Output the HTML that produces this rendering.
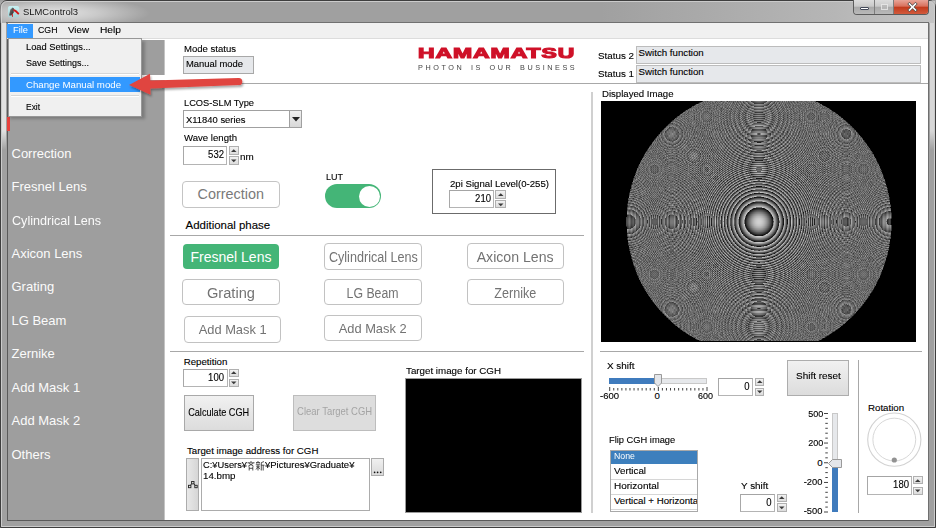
<!DOCTYPE html>
<html><head><meta charset="utf-8">
<style>
*{box-sizing:border-box;margin:0;padding:0}
html,body{width:936px;height:528px;overflow:hidden;background:#a0a0a0}
body{position:relative;font-family:"Liberation Sans",sans-serif;color:#1e1e1e}
.a{position:absolute}
.t{position:absolute;white-space:pre;line-height:1;font-family:"Liberation Sans",sans-serif}
.k{-webkit-text-stroke:0.12px #000}
svg{position:absolute;overflow:visible}
</style></head><body>
<div class="a" style="left:0px;top:0px;width:936px;height:528px;background:#a0a0a0;border:1px solid #3e3e3e;border-radius:7px 7px 0 0"></div>
<div class="a" style="left:1px;top:1px;width:934px;height:526px;border:1px solid rgba(255,255,255,0.45);border-radius:6px 6px 0 0"></div>
<div class="a" style="left:2px;top:23px;width:4px;height:127px;background:linear-gradient(180deg,rgba(225,225,225,1) 0%,rgba(225,225,225,1) 85%,rgba(225,225,225,0) 100%)"></div>
<div class="a" style="left:930px;top:23px;width:4px;height:127px;background:linear-gradient(180deg,rgba(215,215,215,1) 0%,rgba(215,215,215,1) 85%,rgba(215,215,215,0) 100%)"></div>
<div class="a" style="left:0px;top:1px;width:260px;height:22px;background:radial-gradient(ellipse 95px 16px at 55px 12px,rgba(228,228,228,1) 0%,rgba(220,220,220,.7) 45%,rgba(210,210,210,0) 100%)"></div>
<div class="a" style="left:600px;top:1px;width:335px;height:22px;background:linear-gradient(90deg,rgba(200,200,200,0) 0%,rgba(200,200,200,.55) 70%,rgba(205,205,205,.8) 100%)"></div>
<div class="a" style="left:6px;top:22px;width:923px;height:1px;background:#707070"></div>
<svg style="left:0;top:0" width="24" height="24" viewBox="0 0 24 24"><defs><linearGradient id="ig" x1="0" y1="0" x2="0" y2="1"><stop offset="0" stop-color="#c8f0f2"/><stop offset="1" stop-color="#a6d2d6"/></linearGradient><linearGradient id="ig2" x1="0" y1="0" x2="1" y2="1"><stop offset="0" stop-color="#8a8a8a"/><stop offset="1" stop-color="#1e1e1e"/></linearGradient></defs><rect x="8" y="6" width="11.2" height="11.5" rx="2" fill="url(#ig)"/><path d="M9 15.5 L10.3 9.8 L12.6 7.6 L14 8.4 L13.6 12.8 L11.3 15.6 Z" fill="url(#ig2)"/><path d="M14.2 10.2 Q16 10.6 18.3 13.6" stroke="#d41818" stroke-width="1.9" fill="none" stroke-linecap="round"/><path d="M12.2 13.8 L12.5 16.8" stroke="#d41818" stroke-width="1" fill="none"/></svg>
<div class="a" style="left:853px;top:0;width:76px;height:15px;border:1px solid #5c5c5c;border-top:none;border-radius:0 0 4px 4px;overflow:hidden;background:#bbb"><div class="a" style="left:0;top:0;width:21px;height:14px;background:linear-gradient(#dcdcdc,#cacaca 45%,#a9a9a9 50%,#b9b9b9 100%);border-right:1px solid #7d7d7d"></div><div class="a" style="left:21px;top:0;width:19px;height:14px;background:linear-gradient(#dcdcdc,#cacaca 45%,#a9a9a9 50%,#b9b9b9 100%);border-right:1px solid #7d7d7d"></div><div class="a" style="left:40px;top:0;width:35px;height:14px;background:linear-gradient(#e8a598,#d8705c 45%,#c23a1c 50%,#d25a3c 100%)"></div><div class="a" style="left:6px;top:7px;width:9px;height:3px;background:#fff;border:1px solid #444a5a;border-radius:1px"></div><div class="a" style="left:27px;top:4px;width:7px;height:6px;border:1px solid #e8e8e8;background:#b9b9b9;opacity:.85"></div></div>
<svg style="left:907px;top:2px" width="11" height="10" viewBox="0 0 11 10"><path d="M2.5 2 L8.5 8 M8.5 2 L2.5 8" stroke="#4a4a4a" stroke-width="3" stroke-linecap="square"/><path d="M2.5 2 L8.5 8 M8.5 2 L2.5 8" stroke="#fff" stroke-width="1.6" stroke-linecap="square"/></svg>
<div class="a" style="left:7px;top:23px;width:921px;height:16px;background:#f0f0f0;border-left:1px solid #7a7a7a"></div>
<div class="a" style="left:7px;top:38px;width:921px;height:2px;background:#dcdcdc"></div>
<div class="a" style="left:7px;top:24px;width:26px;height:14px;background:#3399ff"></div>
<div class="a" style="left:7px;top:39px;width:921px;height:482px;background:#fff;border-left:1px solid #5a5a5a;border-bottom:1px solid #5a5a5a"></div>
<div class="a" style="left:928px;top:23px;width:1px;height:498px;background:#6f6f6f"></div>
<div class="a" style="left:8px;top:40px;width:156px;height:480px;background:#9e9e9e"></div>
<div class="a" style="left:164px;top:40px;width:1px;height:480px;background:#c4c4c4"></div>
<div class="a" style="left:8px;top:75px;width:157px;height:5px;background:#fff"></div>
<div class="a" style="left:7px;top:117px;width:3px;height:14px;background:#e8413d"></div>
<div class="a" style="left:183px;top:56px;width:71px;height:18px;background:#e6e8eb;border:1px solid #a8a8a8"></div>
<div class="a" style="left:636px;top:46px;width:284.7px;height:18px;background:#e6e8eb;border:1px solid #bcbcbc"></div>
<div class="a" style="left:636px;top:65px;width:284.7px;height:18px;background:#e6e8eb;border:1px solid #bcbcbc"></div>
<div class="a" style="left:165px;top:83px;width:763px;height:1px;background:#a8a8a8"></div>
<div class="a" style="left:591px;top:92px;width:2px;height:421px;background:#d0d0d0"></div>
<div class="a" style="left:601px;top:101px;width:315px;height:240.5px;background:#000"></div>
<div class="a" style="left:183px;top:110px;width:119px;height:18px;background:#fff;border:1px solid #a0a0a0"></div>
<div class="a" style="left:289px;top:110px;width:13px;height:18px;background:linear-gradient(#efefef,#d8d8d8);border:1px solid #a0a0a0"></div>
<svg style="left:291.5px;top:116.5px" width="8" height="5" viewBox="0 0 8 5"><path d="M0 0 L8 0 L4 4.5Z" fill="#222"/></svg>
<div class="a" style="left:183px;top:146px;width:44px;height:19px;background:#fff;border:1px solid #b4b4b4;border-top-color:#a4a4a4;border-left-color:#a8a8a8"></div>
<div class="a" style="left:228.5px;top:146px;width:10.0px;height:8.5px;background:linear-gradient(#f2f2f2,#dcdcdc);border:1px solid #b0b0b0"></div>
<svg style="left:230.75px;top:148.5px" width="5.5" height="3.5" viewBox="0 0 5.5 3.5"><path d="M0 3 L2.75 0.3 L5.5 3Z" fill="#3a3a3a"/></svg>
<div class="a" style="left:228.5px;top:156px;width:10.0px;height:9px;background:linear-gradient(#f2f2f2,#dcdcdc);border:1px solid #b0b0b0"></div>
<svg style="left:230.75px;top:159.0px" width="5.5" height="3.5" viewBox="0 0 5.5 3.5"><path d="M0 0.5 L2.75 3.2 L5.5 0.5Z" fill="#3a3a3a"/></svg>
<div class="a" style="left:182px;top:181px;width:98px;height:26.5px;background:#fff;border:1px solid #c4c4c4;border-radius:4px"></div>
<div class="a" style="left:324.7px;top:184.3px;width:56.6px;height:24.2px;background:#44b577;border-radius:12px"></div>
<div class="a" style="left:358.5px;top:185.7px;width:21.2px;height:21.2px;border-radius:50%;background:#fff"></div>
<div class="a" style="left:432px;top:168.7px;width:124px;height:45.3px;border:1px solid #6b6b6b"></div>
<div class="a" style="left:449.3px;top:190.2px;width:44.7px;height:18.1px;background:#fff;border:1px solid #b4b4b4;border-top-color:#a4a4a4;border-left-color:#a8a8a8"></div>
<div class="a" style="left:495px;top:190.2px;width:10.5px;height:8.8px;background:linear-gradient(#f2f2f2,#dcdcdc);border:1px solid #b0b0b0"></div>
<svg style="left:497.5px;top:192.85px" width="5.5" height="3.5" viewBox="0 0 5.5 3.5"><path d="M0 3 L2.75 0.3 L5.5 3Z" fill="#3a3a3a"/></svg>
<div class="a" style="left:495px;top:200px;width:10.5px;height:8.3px;background:linear-gradient(#f2f2f2,#dcdcdc);border:1px solid #b0b0b0"></div>
<svg style="left:497.5px;top:202.65px" width="5.5" height="3.5" viewBox="0 0 5.5 3.5"><path d="M0 0.5 L2.75 3.2 L5.5 0.5Z" fill="#3a3a3a"/></svg>
<div class="a" style="left:170px;top:235px;width:414px;height:1px;background:#a8a8a8"></div>
<div class="a" style="left:182.8px;top:244.2px;width:96.4px;height:24.8px;background:#44b577;border-radius:4px"></div>
<div class="a" style="left:324.4px;top:243.3px;width:97.3px;height:26.4px;background:#fff;border:1px solid #c2c2c2;border-radius:4px"></div>
<div class="a" style="left:466.6px;top:243.2px;width:97.3px;height:26.1px;background:#fff;border:1px solid #c2c2c2;border-radius:4px"></div>
<div class="a" style="left:182px;top:278.9px;width:97.7px;height:26.4px;background:#fff;border:1px solid #c2c2c2;border-radius:4px"></div>
<div class="a" style="left:324.4px;top:279px;width:97.3px;height:26.3px;background:#fff;border:1px solid #c2c2c2;border-radius:4px"></div>
<div class="a" style="left:466.6px;top:279.3px;width:97.3px;height:26.2px;background:#fff;border:1px solid #c2c2c2;border-radius:4px"></div>
<div class="a" style="left:183.9px;top:316px;width:97.5px;height:26.5px;background:#fff;border:1px solid #c2c2c2;border-radius:4px"></div>
<div class="a" style="left:324.4px;top:314.7px;width:97.3px;height:26.3px;background:#fff;border:1px solid #c2c2c2;border-radius:4px"></div>
<div class="a" style="left:170px;top:351px;width:414px;height:1px;background:#a8a8a8"></div>
<div class="a" style="left:183px;top:369.2px;width:44.5px;height:17.6px;background:#fff;border:1px solid #b4b4b4;border-top-color:#a4a4a4;border-left-color:#a8a8a8"></div>
<div class="a" style="left:229px;top:369.2px;width:10px;height:7.8px;background:linear-gradient(#f2f2f2,#dcdcdc);border:1px solid #b0b0b0"></div>
<svg style="left:231.25px;top:371.35px" width="5.5" height="3.5" viewBox="0 0 5.5 3.5"><path d="M0 3 L2.75 0.3 L5.5 3Z" fill="#3a3a3a"/></svg>
<div class="a" style="left:229px;top:379px;width:10px;height:7.8px;background:linear-gradient(#f2f2f2,#dcdcdc);border:1px solid #b0b0b0"></div>
<svg style="left:231.25px;top:381.4px" width="5.5" height="3.5" viewBox="0 0 5.5 3.5"><path d="M0 0.5 L2.75 3.2 L5.5 0.5Z" fill="#3a3a3a"/></svg>
<div class="a" style="left:184.2px;top:395px;width:69.8px;height:36.3px;background:linear-gradient(#f1f1f1,#dcdcdc);border:1px solid #a9a9a9"></div>
<div class="a" style="left:292.8px;top:395px;width:83.2px;height:36.3px;background:#dddddd;border:1px solid #bdbdbd"></div>
<div class="a" style="left:186.3px;top:458.3px;width:12.5px;height:53.2px;background:linear-gradient(90deg,#e8e8e8,#d6d6d6);border:1px solid #acacac"></div>
<svg style="left:187.5px;top:481px" width="10" height="8" viewBox="0 0 10 8"><g fill="none" stroke="#222" stroke-width="0.9"><rect x="3.6" y="0.5" width="2.4" height="2.4"/><rect x="0.5" y="4.3" width="2.4" height="2.4"/><rect x="6.8" y="4.3" width="2.4" height="2.4"/><path d="M3.8 2.6 L2.4 4.3 M5.8 2.6 L7.2 4.3"/></g></svg>
<div class="a" style="left:201px;top:458.3px;width:168.5px;height:53.2px;background:#fff;border:1px solid #acacac"></div>
<div class="a" style="left:371.4px;top:458.3px;width:12.9px;height:17.7px;background:linear-gradient(#f0f0f0,#dadada);border:1px solid #acacac"></div>
<svg style="left:373px;top:471px" width="9" height="3" viewBox="0 0 9 3"><circle cx="1.6" cy="1.3" r="0.85" fill="#111"/><circle cx="4.6" cy="1.3" r="0.85" fill="#111"/><circle cx="7.7" cy="1.3" r="0.85" fill="#111"/></svg>
<div class="a" style="left:405px;top:378px;width:176.5px;height:134.7px;background:#000;border:1px solid #9a9a9a"></div>
<div class="a" style="left:600px;top:351px;width:321.5px;height:1px;background:#a8a8a8"></div>
<div class="a" style="left:609.2px;top:377.7px;width:97.8px;height:6.0px;background:#e6e8eb;border:1px solid #c8c8c8"></div>
<div class="a" style="left:609.2px;top:377.7px;width:48.8px;height:6.0px;background:#3f7bbd"></div>
<svg style="left:653.9px;top:373.5px" width="8" height="13" viewBox="0 0 8 13"><path d="M0.5 0.5 H7.5 V9 L4 12.5 L0.5 9Z" fill="#e4e6ea" stroke="#9a9a9a" stroke-width="1"/></svg>
<svg style="left:0;top:0" width="936" height="528"><rect x="609.20" y="387" width="1" height="4" fill="#444"/><rect x="613.25" y="388" width="1" height="2.5" fill="#444"/><rect x="617.31" y="388" width="1" height="2.5" fill="#444"/><rect x="621.36" y="388" width="1" height="2.5" fill="#444"/><rect x="625.42" y="388" width="1" height="2.5" fill="#444"/><rect x="629.47" y="388" width="1" height="2.5" fill="#444"/><rect x="633.53" y="388" width="1" height="2.5" fill="#444"/><rect x="637.58" y="388" width="1" height="2.5" fill="#444"/><rect x="641.63" y="388" width="1" height="2.5" fill="#444"/><rect x="645.69" y="388" width="1" height="2.5" fill="#444"/><rect x="649.74" y="388" width="1" height="2.5" fill="#444"/><rect x="653.80" y="388" width="1" height="2.5" fill="#444"/><rect x="657.85" y="387" width="1" height="4" fill="#444"/><rect x="661.90" y="388" width="1" height="2.5" fill="#444"/><rect x="665.96" y="388" width="1" height="2.5" fill="#444"/><rect x="670.01" y="388" width="1" height="2.5" fill="#444"/><rect x="674.07" y="388" width="1" height="2.5" fill="#444"/><rect x="678.12" y="388" width="1" height="2.5" fill="#444"/><rect x="682.18" y="388" width="1" height="2.5" fill="#444"/><rect x="686.23" y="388" width="1" height="2.5" fill="#444"/><rect x="690.28" y="388" width="1" height="2.5" fill="#444"/><rect x="694.34" y="388" width="1" height="2.5" fill="#444"/><rect x="698.39" y="388" width="1" height="2.5" fill="#444"/><rect x="702.45" y="388" width="1" height="2.5" fill="#444"/><rect x="706.50" y="387" width="1" height="4" fill="#444"/></svg>
<div class="a" style="left:717.5px;top:378px;width:35.5px;height:17.5px;background:#fff;border:1px solid #b4b4b4;border-top-color:#a4a4a4;border-left-color:#a8a8a8"></div>
<div class="a" style="left:754.8px;top:378px;width:9.6px;height:7.8px;background:linear-gradient(#f2f2f2,#dcdcdc);border:1px solid #b0b0b0"></div>
<svg style="left:756.8499999999999px;top:380.15px" width="5.5" height="3.5" viewBox="0 0 5.5 3.5"><path d="M0 3 L2.75 0.3 L5.5 3Z" fill="#3a3a3a"/></svg>
<div class="a" style="left:754.8px;top:387.5px;width:9.6px;height:8.0px;background:linear-gradient(#f2f2f2,#dcdcdc);border:1px solid #b0b0b0"></div>
<svg style="left:756.8499999999999px;top:390.0px" width="5.5" height="3.5" viewBox="0 0 5.5 3.5"><path d="M0 0.5 L2.75 3.2 L5.5 0.5Z" fill="#3a3a3a"/></svg>
<div class="a" style="left:787.2px;top:360px;width:62.2px;height:35.5px;background:linear-gradient(#f1f1f1,#dcdcdc);border:1px solid #adadad"></div>
<div class="a" style="left:858px;top:360px;width:1px;height:153px;background:#a8a8a8"></div>
<svg style="left:0;top:0" width="936" height="528"><circle cx="894.3" cy="439.6" r="26.6" fill="none" stroke="#d2d2d2" stroke-width="1.1"/><circle cx="894.3" cy="439.6" r="21.4" fill="none" stroke="#d8d8d8" stroke-width="1"/><circle cx="894.3" cy="460" r="2.6" fill="#929292"/></svg>
<div class="a" style="left:867.1px;top:476.4px;width:44.9px;height:18.8px;background:#fff;border:1px solid #b4b4b4;border-top-color:#a4a4a4;border-left-color:#a8a8a8"></div>
<div class="a" style="left:913.2px;top:476.4px;width:9.8px;height:8.0px;background:linear-gradient(#f2f2f2,#dcdcdc);border:1px solid #b0b0b0"></div>
<svg style="left:915.35px;top:478.65px" width="5.5" height="3.5" viewBox="0 0 5.5 3.5"><path d="M0 3 L2.75 0.3 L5.5 3Z" fill="#3a3a3a"/></svg>
<div class="a" style="left:913.2px;top:486.6px;width:9.8px;height:8.6px;background:linear-gradient(#f2f2f2,#dcdcdc);border:1px solid #b0b0b0"></div>
<svg style="left:915.35px;top:489.4px" width="5.5" height="3.5" viewBox="0 0 5.5 3.5"><path d="M0 0.5 L2.75 3.2 L5.5 0.5Z" fill="#3a3a3a"/></svg>
<div class="a" style="left:831.5px;top:413.3px;width:6.5px;height:98.7px;background:#e6e8eb;border:1px solid #c8c8c8"></div>
<div class="a" style="left:831.5px;top:465.5px;width:6.5px;height:46.5px;background:#3f7bbd"></div>
<svg style="left:828px;top:458.5px" width="14" height="9" viewBox="0 0 14 9"><path d="M13.5 0.5 V8.5 H4.5 L0.5 4.5 L4.5 0.5Z" fill="#e4e6ea" stroke="#9a9a9a" stroke-width="1"/></svg>
<svg style="left:0;top:0" width="936" height="528"><rect x="824" y="413.00" width="4" height="1" fill="#444"/><rect x="825.3" y="417.93" width="2.5" height="1" fill="#444"/><rect x="825.3" y="422.85" width="2.5" height="1" fill="#444"/><rect x="825.3" y="427.77" width="2.5" height="1" fill="#444"/><rect x="825.3" y="432.70" width="2.5" height="1" fill="#444"/><rect x="825.3" y="437.62" width="2.5" height="1" fill="#444"/><rect x="824" y="442.55" width="4" height="1" fill="#444"/><rect x="825.3" y="447.48" width="2.5" height="1" fill="#444"/><rect x="825.3" y="452.40" width="2.5" height="1" fill="#444"/><rect x="825.3" y="457.32" width="2.5" height="1" fill="#444"/><rect x="824" y="462.25" width="4" height="1" fill="#444"/><rect x="825.3" y="467.18" width="2.5" height="1" fill="#444"/><rect x="825.3" y="472.10" width="2.5" height="1" fill="#444"/><rect x="825.3" y="477.02" width="2.5" height="1" fill="#444"/><rect x="824" y="481.95" width="4" height="1" fill="#444"/><rect x="825.3" y="486.88" width="2.5" height="1" fill="#444"/><rect x="825.3" y="491.80" width="2.5" height="1" fill="#444"/><rect x="825.3" y="496.73" width="2.5" height="1" fill="#444"/><rect x="825.3" y="501.65" width="2.5" height="1" fill="#444"/><rect x="825.3" y="506.57" width="2.5" height="1" fill="#444"/><rect x="824" y="511.50" width="4" height="1" fill="#444"/></svg>
<div class="a" style="left:609.6px;top:449.6px;width:88.4px;height:62.0px;background:#fff;border:1px solid #a9a9a9"></div>
<div class="a" style="left:610.6px;top:450.6px;width:86.4px;height:13.4px;background:#3d7fbd"></div>
<div class="a" style="left:610.6px;top:479px;width:86.4px;height:1px;background:#d6d6d6"></div>
<div class="a" style="left:610.6px;top:494px;width:86.4px;height:1px;background:#d6d6d6"></div>
<div class="a" style="left:610.6px;top:508.8px;width:86.4px;height:1.0px;background:#d6d6d6"></div>
<div class="a" style="left:740px;top:494px;width:35px;height:17.6px;background:#fff;border:1px solid #b4b4b4;border-top-color:#a4a4a4;border-left-color:#a8a8a8"></div>
<div class="a" style="left:777.4px;top:494px;width:9.2px;height:7.8px;background:linear-gradient(#f2f2f2,#dcdcdc);border:1px solid #b0b0b0"></div>
<svg style="left:779.25px;top:496.15px" width="5.5" height="3.5" viewBox="0 0 5.5 3.5"><path d="M0 3 L2.75 0.3 L5.5 3Z" fill="#3a3a3a"/></svg>
<div class="a" style="left:777.4px;top:503.4px;width:9.2px;height:8.2px;background:linear-gradient(#f2f2f2,#dcdcdc);border:1px solid #b0b0b0"></div>
<svg style="left:779.25px;top:506.0px" width="5.5" height="3.5" viewBox="0 0 5.5 3.5"><path d="M0 0.5 L2.75 3.2 L5.5 0.5Z" fill="#3a3a3a"/></svg>
<div class="a" style="left:10px;top:41px;width:135px;height:78px;background:rgba(0,0,0,.22);filter:blur(1.5px)"></div>
<div class="a" style="left:7.5px;top:38px;width:134.5px;height:78.5px;background:#f0f0f0;border:1px solid #979797"></div>
<div class="a" style="left:10.5px;top:73px;width:128.0px;height:1px;background:#d7d7d7"></div>
<div class="a" style="left:10.5px;top:74px;width:128.0px;height:1px;background:#fff"></div>
<div class="a" style="left:9.7px;top:77.3px;width:130.5px;height:14.9px;background:#3399ff"></div>
<div class="a" style="left:10.5px;top:95px;width:128.0px;height:1px;background:#d7d7d7"></div>
<div class="a" style="left:10.5px;top:96px;width:128.0px;height:1px;background:#fff"></div>
<canvas id="cv" width="315" height="240" style="position:absolute;left:601px;top:101px;width:315px;height:240px;background:radial-gradient(circle at 50% 50%,#6a6a6a 0,#6a6a6a 131px,#000 132px)"></canvas>
<div class="t" style="left:23.20px;top:6.99px;font-size:9.7px;color:#141414;font-weight:400;transform:scaleX(0.9726);transform-origin:left top;">SLMControl3</div>
<div class="t" style="left:13.00px;top:25.29px;font-size:9.7px;color:#fff;font-weight:400;transform:scaleX(0.9600);transform-origin:left top;">File</div>
<div class="t k" style="left:37.50px;top:25.29px;font-size:9.7px;color:#000;font-weight:400;transform:scaleX(0.9057);transform-origin:left top;">CGH</div>
<div class="t k" style="left:67.50px;top:25.29px;font-size:9.7px;color:#000;font-weight:400;transform:scaleX(1.0083);transform-origin:left top;">View</div>
<div class="t k" style="left:99.50px;top:25.29px;font-size:9.7px;color:#000;font-weight:400;transform:scaleX(1.0533);transform-origin:left top;">Help</div>
<div class="t" style="left:11.50px;top:146.70px;font-size:13px;color:#fbfbfb;font-weight:400;">Correction</div>
<div class="t" style="left:11.50px;top:180.13px;font-size:13px;color:#fbfbfb;font-weight:400;">Fresnel Lens</div>
<div class="t" style="left:11.50px;top:213.56px;font-size:13px;color:#fbfbfb;font-weight:400;transform:scaleX(0.9699);transform-origin:left top;">Cylindrical Lens</div>
<div class="t" style="left:11.50px;top:246.99px;font-size:13px;color:#fbfbfb;font-weight:400;">Axicon Lens</div>
<div class="t" style="left:11.50px;top:280.42px;font-size:13px;color:#fbfbfb;font-weight:400;">Grating</div>
<div class="t" style="left:11.50px;top:313.85px;font-size:13px;color:#fbfbfb;font-weight:400;">LG Beam</div>
<div class="t" style="left:11.50px;top:347.28px;font-size:13px;color:#fbfbfb;font-weight:400;">Zernike</div>
<div class="t" style="left:11.50px;top:380.71px;font-size:13px;color:#fbfbfb;font-weight:400;">Add Mask 1</div>
<div class="t" style="left:11.50px;top:414.14px;font-size:13px;color:#fbfbfb;font-weight:400;">Add Mask 2</div>
<div class="t" style="left:11.50px;top:447.57px;font-size:13px;color:#fbfbfb;font-weight:400;">Others</div>
<div class="t k" style="left:184.00px;top:44.49px;font-size:9.7px;color:#000;font-weight:400;transform:scaleX(0.9852);transform-origin:left top;">Mode status</div>
<div class="t k" style="left:185.60px;top:58.59px;font-size:9.7px;color:#000;font-weight:400;transform:scaleX(0.9710);transform-origin:left top;">Manual mode</div>
<div class="t" style="left:417.90px;top:45.78px;font-size:14.2px;color:#cf1128;font-weight:700;transform:scaleX(1.6149);transform-origin:left top;-webkit-text-stroke:1.1px #cf1128;letter-spacing:0.6px;">HAMAMATSU</div>
<div class="t" style="left:418.30px;top:63.91px;font-size:7.2px;color:#444;font-weight:400;transform:scaleX(1.0093);transform-origin:left top;letter-spacing:2.55px;word-spacing:2px;">PHOTON IS OUR BUSINESS</div>
<div class="t k" style="left:597.60px;top:50.54px;font-size:9.7px;color:#000;font-weight:400;transform:scaleX(1.0127);transform-origin:left top;">Status 2</div>
<div class="t k" style="left:597.60px;top:69.29px;font-size:9.7px;color:#000;font-weight:400;transform:scaleX(1.0127);transform-origin:left top;">Status 1</div>
<div class="t k" style="left:638.60px;top:48.49px;font-size:9.7px;color:#000;font-weight:400;">Switch function</div>
<div class="t k" style="left:638.60px;top:66.99px;font-size:9.7px;color:#000;font-weight:400;">Switch function</div>
<div class="t k" style="left:601.80px;top:89.39px;font-size:9.7px;color:#000;font-weight:400;transform:scaleX(0.9909);transform-origin:left top;">Displayed Image</div>
<div class="t k" style="left:183.80px;top:98.19px;font-size:9.7px;color:#000;font-weight:400;transform:scaleX(0.9583);transform-origin:left top;">LCOS-SLM Type</div>
<div class="t k" style="left:186.00px;top:114.79px;font-size:9.7px;color:#000;font-weight:400;transform:scaleX(0.9719);transform-origin:left top;">X11840 series</div>
<div class="t k" style="left:184.00px;top:133.29px;font-size:9.7px;color:#000;font-weight:400;transform:scaleX(0.9907);transform-origin:left top;">Wave length</div>
<div class="t k" style="left:207.30px;top:150.07px;font-size:10.2px;color:#000;font-weight:400;transform:scaleX(0.9353);transform-origin:right top;">532</div>
<div class="t k" style="left:239.80px;top:152.29px;font-size:9.7px;color:#000;font-weight:400;transform:scaleX(1.0172);transform-origin:left top;">nm</div>
<div class="t" style="left:197.60px;top:187.31px;font-size:14.4px;color:#7a7a7a;font-weight:400;">Correction</div>
<div class="t k" style="left:325.90px;top:172.10px;font-size:9.8px;color:#000;font-weight:400;transform:scaleX(0.9181);transform-origin:left top;">LUT</div>
<div class="t k" style="left:450.20px;top:179.19px;font-size:9.7px;color:#000;font-weight:400;transform:scaleX(0.9936);transform-origin:left top;">2pi Signal Level(0-255)</div>
<div class="t k" style="left:473.80px;top:194.17px;font-size:10.2px;color:#000;font-weight:400;transform:scaleX(0.9353);transform-origin:right top;">210</div>
<div class="t k" style="left:185.60px;top:219.81px;font-size:11.45px;color:#000;font-weight:400;">Additional phase</div>
<div class="t" style="left:190.53px;top:250.15px;font-size:14px;color:#fff;font-weight:400;">Fresnel Lens</div>
<div class="t" style="left:323.64px;top:250.15px;font-size:14px;color:#737373;font-weight:400;transform:scaleX(0.9006);transform-origin:center top;">Cylindrical Lens</div>
<div class="t" style="left:477.11px;top:249.55px;font-size:14px;color:#737373;font-weight:400;transform:scaleX(1.0094);transform-origin:center top;">Axicon Lens</div>
<div class="t" style="left:207.89px;top:285.65px;font-size:14px;color:#737373;font-weight:400;transform:scaleX(1.0453);transform-origin:center top;">Grating</div>
<div class="t" style="left:343.48px;top:285.65px;font-size:14px;color:#737373;font-weight:400;transform:scaleX(0.8793);transform-origin:center top;">LG Beam</div>
<div class="t" style="left:491.91px;top:285.65px;font-size:14px;color:#737373;font-weight:400;transform:scaleX(0.8996);transform-origin:center top;">Zernike</div>
<div class="t" style="left:197.00px;top:322.77px;font-size:13.5px;color:#737373;font-weight:400;transform:scaleX(0.9538);transform-origin:center top;">Add Mask 1</div>
<div class="t" style="left:337.40px;top:321.57px;font-size:13.5px;color:#737373;font-weight:400;transform:scaleX(0.9538);transform-origin:center top;">Add Mask 2</div>
<div class="t k" style="left:183.70px;top:357.09px;font-size:9.7px;color:#000;font-weight:400;">Repetition</div>
<div class="t k" style="left:207.00px;top:372.77px;font-size:10.2px;color:#000;font-weight:400;transform:scaleX(0.9353);transform-origin:right top;">100</div>
<div class="t k" style="left:182.42px;top:407.19px;font-size:11px;color:#000;font-weight:400;transform:scaleX(0.8315);transform-origin:center top;">Calculate CGH</div>
<div class="t" style="left:290.99px;top:405.99px;font-size:11px;color:#a4a4a4;font-weight:400;transform:scaleX(0.8599);transform-origin:center top;">Clear Target CGH</div>
<div class="t k" style="left:187.00px;top:446.49px;font-size:9.7px;color:#000;font-weight:400;">Target image address for CGH</div>
<div class="t k" style="left:202.80px;top:460.49px;font-size:9.7px;color:#000;font-weight:400;transform:scaleX(0.9614);transform-origin:left top;">C:¥Users¥</div>
<div class="t k" style="left:265.40px;top:460.49px;font-size:9.7px;color:#000;font-weight:400;transform:scaleX(0.9764);transform-origin:left top;">¥Pictures¥Graduate¥</div>
<div class="t k" style="left:202.60px;top:471.29px;font-size:9.7px;color:#000;font-weight:400;transform:scaleX(1.0058);transform-origin:left top;">14.bmp</div>
<div class="t k" style="left:406.10px;top:366.09px;font-size:9.7px;color:#000;font-weight:400;transform:scaleX(1.0083);transform-origin:left top;">Target image for CGH</div>
<div class="t k" style="left:606.50px;top:361.19px;font-size:9.7px;color:#000;font-weight:400;transform:scaleX(1.0215);transform-origin:left top;">X shift</div>
<div class="t k" style="left:600.20px;top:391.39px;font-size:9.7px;color:#000;font-weight:400;transform:scaleX(0.9799);transform-origin:left top;">-600</div>
<div class="t k" style="left:654.60px;top:391.39px;font-size:9.7px;color:#000;font-weight:400;">0</div>
<div class="t k" style="left:697.70px;top:391.39px;font-size:9.7px;color:#000;font-weight:400;transform:scaleX(0.9275);transform-origin:left top;">600</div>
<div class="t k" style="left:744.33px;top:381.87px;font-size:10.2px;color:#000;font-weight:400;transform:scaleX(0.9344);transform-origin:right top;">0</div>
<div class="t k" style="left:795.50px;top:371.29px;font-size:9.7px;color:#000;font-weight:400;transform:scaleX(1.0269);transform-origin:left top;">Shift reset</div>
<div class="t k" style="left:868.00px;top:402.59px;font-size:9.7px;color:#000;font-weight:400;">Rotation</div>
<div class="t k" style="left:891.80px;top:479.87px;font-size:10.2px;color:#000;font-weight:400;transform:scaleX(0.9353);transform-origin:right top;">180</div>
<div class="t k" style="left:806.53px;top:408.79px;font-size:9.7px;color:#000;font-weight:400;transform:scaleX(0.9275);transform-origin:right top;">500</div>
<div class="t k" style="left:806.53px;top:437.99px;font-size:9.7px;color:#000;font-weight:400;transform:scaleX(0.9275);transform-origin:right top;">200</div>
<div class="t k" style="left:817.31px;top:457.99px;font-size:9.7px;color:#000;font-weight:400;">0</div>
<div class="t k" style="left:803.31px;top:477.19px;font-size:9.7px;color:#000;font-weight:400;transform:scaleX(0.9644);transform-origin:right top;">-200</div>
<div class="t k" style="left:803.31px;top:506.29px;font-size:9.7px;color:#000;font-weight:400;transform:scaleX(0.9644);transform-origin:right top;">-500</div>
<div class="t k" style="left:609.00px;top:434.99px;font-size:9.7px;color:#000;font-weight:400;transform:scaleX(0.9607);transform-origin:left top;">Flip CGH image</div>
<div class="t" style="left:614.30px;top:451.39px;font-size:9.7px;color:#fff;font-weight:400;transform:scaleX(0.9063);transform-origin:left top;">None</div>
<div class="t k" style="left:613.90px;top:465.89px;font-size:9.7px;color:#000;font-weight:400;transform:scaleX(1.0069);transform-origin:left top;">Vertical</div>
<div class="t k" style="left:613.90px;top:480.89px;font-size:9.7px;color:#000;font-weight:400;transform:scaleX(1.0315);transform-origin:left top;">Horizontal</div>
<div class="t k" style="left:613.90px;top:495.79px;font-size:9.7px;color:#000;font-weight:400;width:83px;overflow:hidden;">Vertical + Horizontal</div>
<div class="t k" style="left:740.60px;top:481.49px;font-size:9.7px;color:#000;font-weight:400;transform:scaleX(1.0206);transform-origin:left top;">Y shift</div>
<div class="t k" style="left:766.33px;top:497.87px;font-size:10.2px;color:#000;font-weight:400;transform:scaleX(0.9344);transform-origin:right top;">0</div>
<div class="t k" style="left:25.60px;top:42.34px;font-size:9.4px;color:#000;font-weight:400;transform:scaleX(0.9930);transform-origin:left top;">Load Settings...</div>
<div class="t k" style="left:25.60px;top:57.74px;font-size:9.4px;color:#000;font-weight:400;transform:scaleX(0.9593);transform-origin:left top;">Save Settings...</div>
<div class="t" style="left:25.60px;top:79.84px;font-size:9.4px;color:#fff;font-weight:400;transform:scaleX(1.0298);transform-origin:left top;">Change Manual mode</div>
<div class="t k" style="left:25.60px;top:101.54px;font-size:9.4px;color:#000;font-weight:400;transform:scaleX(0.9015);transform-origin:left top;">Exit</div>
<svg style="left:247px;top:461px" width="18" height="10" viewBox="0 0 18 10"><g stroke="#333" stroke-width="0.85" fill="none"><path d="M4 0 V1.3 M0.5 1.8 H7.5 M1.8 2.3 L6.5 5.2 M6.3 2.3 L1.2 5.2 M2.2 5.5 V9.5 M5.8 5.5 V9.5 M2.2 7.3 H5.8"/><path d="M11 0 V1 M9 1.5 H13 M9.7 2.2 L10.2 3.2 M12.3 2.2 L11.8 3.2 M8.8 3.8 H13.2 M9.2 5.8 H12.8 M11 3.8 V9.5 M10.8 6.2 L9 8.5 M11.2 6.2 L13 8.2 M17 0.6 L14.3 1.6 V9.5 M14.3 4.2 H17.5 M16.2 4.2 V9.5"/></g></svg>
<svg style="left:0;top:0" width="936" height="528"><defs><filter id="sh" x="-10%" y="-30%" width="130%" height="170%"><feGaussianBlur in="SourceAlpha" stdDeviation="1.2"/><feOffset dx="1" dy="2"/><feComponentTransfer><feFuncA type="linear" slope="0.35"/></feComponentTransfer><feMerge><feMergeNode/><feMergeNode in="SourceGraphic"/></feMerge></filter></defs><g filter="url(#sh)"><path d="M129 85 L150 73.8 L150.3 80.6 L238.6 77.9 A3.6 3.6 0 0 1 238.8 85.1 L150.3 88.4 L150.6 94.8 Z" fill="#e0443f"/></g></svg>
<script>
(function(){
var c=document.getElementById('cv');if(!c||!c.getContext)return;
var ctx=c.getContext('2d');var W=792,H=600,OW=315,OH=240,a=0.00478,rad=333;
var g=new Float32Array(W*H);
for(var y=0;y<H;y++){var yy=y-H/2-1.5;for(var x=0;x<W;x++){var xx=x-W/2-0.8;var r2=xx*xx+yy*yy;
 if(r2>rad*rad){g[y*W+x]=0;continue;}
 var ph=(-a*r2)%(2*Math.PI);if(ph<0)ph+=2*Math.PI;g[y*W+x]=ph/(2*Math.PI)*210;}}
function idx(inS,outS){var sc=inS/outS,sup=0.5*sc,L=[];for(var i=0;i<outS;i++){var ce=(i+0.5)*sc;var mn=Math.max(Math.floor(ce-sup+0.5),0),mx=Math.min(Math.floor(ce+sup+0.5),inS);var arr=[];for(var j=mn;j<mx;j++){var v=(j-ce+0.5)/sc;if(v>=-0.5&&v<0.5)arr.push(j);}L.push(arr);}return L;}
var IX=idx(W,OW),IY=idx(H,OH);
var img=ctx.createImageData(OW,OH);var d=img.data;
// horizontal pass
var tmp=new Float32Array(OW*H);
for(var y=0;y<H;y++){for(var i=0;i<OW;i++){var arr=IX[i],s=0;for(var k=0;k<arr.length;k++)s+=g[y*W+arr[k]];tmp[y*OW+i]=s/arr.length;}}
for(var j=0;j<OH;j++){var arr=IY[j];for(var i=0;i<OW;i++){var s=0;for(var k=0;k<arr.length;k++)s+=tmp[arr[k]*OW+i];var v=Math.round(s/arr.length);var p=(j*OW+i)*4;d[p]=d[p+1]=d[p+2]=v;d[p+3]=255;}}
ctx.putImageData(img,0,0);
})();
</script>
</body></html>
